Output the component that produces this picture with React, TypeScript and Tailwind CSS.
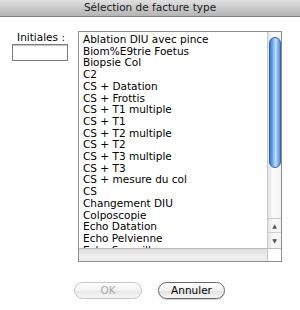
import React from 'react';

const items = [
  'Ablation DIU avec pince',
  'Biom%E9trie Foetus',
  'Biopsie Col',
  'C2',
  'CS + Datation',
  'CS + Frottis',
  'CS + T1 multiple',
  'CS + T1',
  'CS + T2 multiple',
  'CS + T2',
  'CS + T3 multiple',
  'CS + T3',
  'CS + mesure du col',
  'CS',
  'Changement DIU',
  'Colposcopie',
  'Echo Datation',
  'Echo Pelvienne',
  'Echo Surveillance',
];

const font = "font-['Lucida_Grande','DejaVu_Sans',sans-serif]";

export default function App() {
  return (
    <div className={`w-[300px] h-[310px] bg-white flex flex-col text-black ${font}`}>
      {/* title bar */}
      <div className="h-[17px] shrink-0 flex items-center justify-center bg-[linear-gradient(#e0e0e0,#b4b4b4)] border-b border-[#808080] text-[10.5px] text-[#1a1a1a]">
        Sélection de facture type
      </div>

      <div className="flex pl-[12px]">
        {/* initiales */}
        <div className="w-[56px] flex flex-col items-center mt-[14px]">
          <div className="text-[10.5px] leading-[12px] h-[13px] pl-[2px]">Initiales :</div>
          <div className="w-[56px] h-[17px] border border-[#7c7c7c] bg-white shadow-[inset_0_1px_1px_rgba(0,0,0,0.25)]" />
        </div>

        {/* list box */}
        <div className="ml-[10px] mt-[14px] w-[204px] h-[231px] border border-[#8e8e8e] flex flex-col bg-white">
          <div className="flex flex-1 min-h-0">
            <div className="flex-1 overflow-hidden pt-[2px] pl-[4px] text-[10.5px] leading-[11.7px] whitespace-nowrap">
              {items.map((t) => (
                <div key={t}>{t}</div>
              ))}
            </div>
            {/* vertical scrollbar */}
            <div className="w-[14px] flex flex-col border-l border-[#c8c8c8] bg-[linear-gradient(90deg,#e4e4e4,#fafafa_40%,#f2f2f2)]">
              <div className="flex-1 relative">
                <div className="absolute left-[1px] top-[5px] w-[12px] h-[131px] rounded-full border border-[#3e64a0] bg-[linear-gradient(90deg,#3777d6,#8fc0f4_40%,#c3e0fb_55%,#4d8fe4)]" />
              </div>
              <div className="h-[30px] border-t border-[#c8c8c8] flex flex-col">
                <div className="h-[14px] flex items-center justify-center text-[6px] text-[#555] border-b border-[#d0d0d0]">▲</div>
                <div className="h-[15px] flex items-center justify-center text-[6px] text-[#555]">▼</div>
              </div>
            </div>
          </div>
          {/* horizontal scrollbar */}
          <div className="h-[13px] flex border-t border-[#bdbdbd]">
            <div className="flex-1 bg-[linear-gradient(#dcdcdc,#f0f0f0_60%,#e8e8e8)]" />
            <div className="w-[14px] border-l border-[#c8c8c8] bg-white" />
          </div>
        </div>
      </div>

      {/* buttons */}
      <div className="flex ml-[74px] mt-[20px] gap-[16px]">
        <div className="w-[68px] h-[17px] rounded-full border border-[#c4c4c4] bg-[linear-gradient(#ffffff,#f1f1f1_50%,#e6e6e6_51%,#f6f6f6)] flex items-center justify-center text-[10.5px] text-[#a8a8a8]">
          OK
        </div>
        <div className="w-[67px] h-[17px] rounded-full border border-[#6a6a6a] bg-[linear-gradient(#ffffff,#f1f1f1_50%,#e1e1e1_51%,#f4f4f4)] flex items-center justify-center text-[10.5px] text-black shadow-[0_1px_1px_rgba(0,0,0,0.2)]">
          Annuler
        </div>
      </div>
    </div>
  );
}
